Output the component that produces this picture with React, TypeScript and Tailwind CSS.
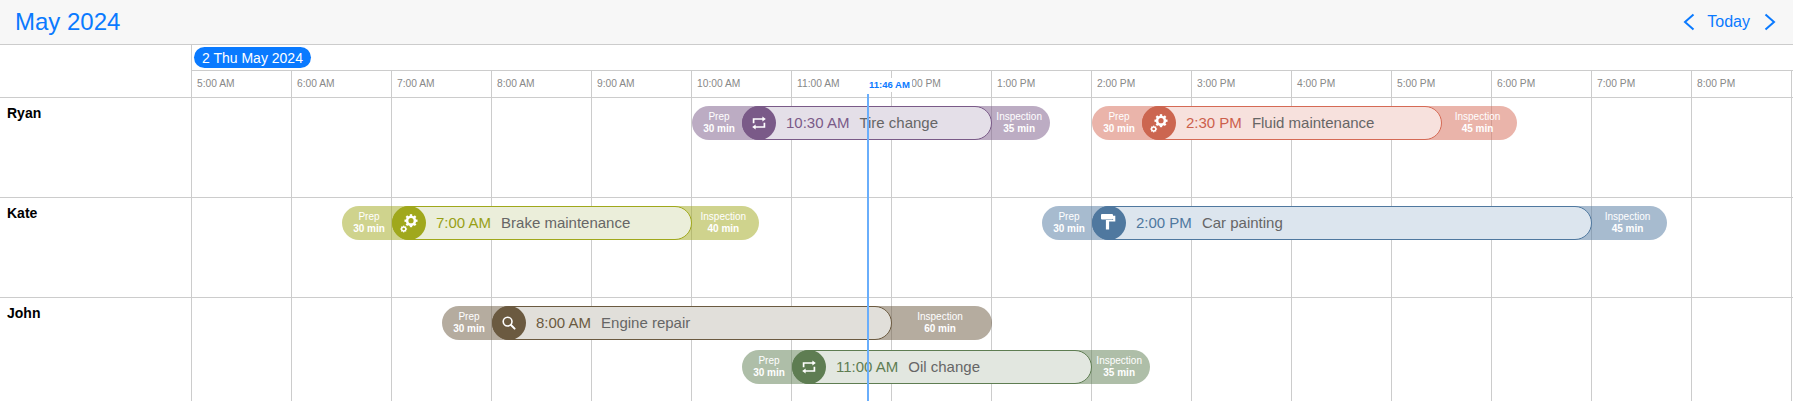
import React from "react";

const HOURS = ["5:00 AM","6:00 AM","7:00 AM","8:00 AM","9:00 AM","10:00 AM","11:00 AM","12:00 PM","1:00 PM","2:00 PM","3:00 PM","4:00 PM","5:00 PM","6:00 PM","7:00 PM","8:00 PM"];
const PX_PER_MIN = 100 / 60;

const Repeat = () => (
  <svg width="16" height="16" viewBox="0 0 16 16" fill="none" stroke="white" strokeWidth="1.7">
    <path d="M2.6 8.2V4H12" />
    <path d="M11.4 1.4L14.8 4L11.4 6.6Z" fill="white" stroke="none" />
    <path d="M13.4 7.8V12H4" />
    <path d="M4.6 9.4L1.2 12L4.6 14.6Z" fill="white" stroke="none" />
  </svg>
);

const Gear = ({ x, y, r }: { x: number; y: number; r: number }) => {
  const teeth = Array.from({ length: 8 }, (_, i) => i * 45);
  return (
    <g transform={`translate(${x} ${y})`}>
      {teeth.map((a) => (
        <rect key={a} x={-r * 0.18} y={-r} width={r * 0.36} height={r * 0.42} fill="white" transform={`rotate(${a})`} />
      ))}
      <circle r={r * 0.6} fill="none" stroke="white" strokeWidth={r * 0.4} />
    </g>
  );
};

const Gears = () => (
  <svg width="24" height="24" viewBox="0 0 24 24">
    <Gear x={14} y={9.7} r={6.5} />
    <Gear x={6.7} y={18} r={3.4} />
  </svg>
);

const Roller = () => (
  <svg width="18" height="20" viewBox="0 0 18 20" fill="white">
    <rect x="1" y="1" width="12" height="5.4" rx="1" />
    <path d="M13 2.8H15.3V8.6H9.1V16.4H5.9V6.9H13.2V6.4H13Z" />
  </svg>
);

const Search = () => (
  <svg width="18" height="18" viewBox="0 0 18 18" fill="none" stroke="white">
    <circle cx="7.6" cy="7.6" r="4.4" strokeWidth="1.6" />
    <path d="M11 11L14.6 14.6" strokeWidth="2" strokeLinecap="round" />
  </svg>
);

type Ev = {
  start: number; end: number; insp: number; top: number;
  time: string; title: string; icon: React.ReactNode;
  pill: string; main: string; dark: string; text: string;
};

const ROWS: { name: string; events: Ev[]; last?: boolean }[] = [
  { name: "Ryan", events: [
    { start: 10.5, end: 13, insp: 35, top: 8, time: "10:30 AM", title: "Tire change", icon: <Repeat />, pill: "bg-[#7a5a88]/50", main: "bg-[#e4dfe8] border-[#7a5a88]", dark: "bg-[#7a5a88]", text: "text-[#7a5a88]" },
    { start: 14.5, end: 17.5, insp: 45, top: 8, time: "2:30 PM", title: "Fluid maintenance", icon: <Gears />, pill: "bg-[#d56a55]/50", main: "bg-[#f7e1dd] border-[#d56a55]", dark: "bg-[#cc6650]", text: "text-[#cc5f4c]" },
  ]},
  { name: "Kate", events: [
    { start: 7, end: 10, insp: 40, top: 8, time: "7:00 AM", title: "Brake maintenance", icon: <Gears />, pill: "bg-[#a0a81c]/50", main: "bg-[#ebeeda] border-[#a0a81c]", dark: "bg-[#a0a81c]", text: "text-[#98a015]" },
    { start: 14, end: 19, insp: 45, top: 8, time: "2:00 PM", title: "Car painting", icon: <Roller />, pill: "bg-[#4f789f]/50", main: "bg-[#dce5ee] border-[#4f789f]", dark: "bg-[#4f789f]", text: "text-[#4f789f]" },
  ]},
  { name: "John", last: true, events: [
    { start: 8, end: 12, insp: 60, top: 8, time: "8:00 AM", title: "Engine repair", icon: <Search />, pill: "bg-[#6b5a40]/50", main: "bg-[#e1dfda] border-[#6b5a40]", dark: "bg-[#6b5a40]", text: "text-[#6b5a40]" },
    { start: 11, end: 14, insp: 35, top: 52, time: "11:00 AM", title: "Oil change", icon: <Repeat />, pill: "bg-[#5e7d52]/50", main: "bg-[#e2e7e0] border-[#5e7d52]", dark: "bg-[#5e7d52]", text: "text-[#5e7d52]" },
  ]},
];

const Event = ({ e }: { e: Ev }) => {
  const left = (e.start - 5) * 100 - 50;
  const width = 50 + (e.end - e.start) * 100 + e.insp * PX_PER_MIN;
  return (
    <div
      className={`absolute flex h-[34px] rounded-[17px] ${e.pill} text-white text-[10px] leading-[12px]`}
      style={{ left, width, top: e.top }}
    >
      <div className="flex w-[50px] shrink-0 flex-col items-center justify-center pl-1">
        <span>Prep</span>
        <span className="font-bold">30 min</span>
      </div>
      <div
        className={`flex h-[34px] items-center rounded-[17px] border pb-[2px] ${e.main}`}
        style={{ width: (e.end - e.start) * 100 }}
      >
        <div className={`-mb-[2px] -ml-px flex h-[34px] w-[34px] shrink-0 items-center justify-center rounded-full ${e.dark}`}>
          {e.icon}
        </div>
        <span className={`ml-[10px] text-[15px] leading-none ${e.text}`}>{e.time}</span>
        <span className="ml-[10px] text-[15px] leading-none text-[#666666]">{e.title}</span>
      </div>
      <div className="flex flex-1 flex-col items-center justify-center pr-1">
        <span>Inspection</span>
        <span className="font-bold">{e.insp} min</span>
      </div>
    </div>
  );
};

export default function App() {
  return (
    <div className="relative h-[401px] w-[1793px] overflow-hidden bg-white font-['Liberation_Sans',Arial,sans-serif]">
      <header className="flex h-[45px] items-center justify-between border-b border-[#cccccc] bg-[#f7f7f7] pl-[15px] pr-[17px]">
        <h1 className="text-[24px] leading-none text-[#0a7aff]">May 2024</h1>
        <div className="flex items-center text-[#0a7aff]">
          <svg width="12" height="18" viewBox="0 0 12 18" fill="none" stroke="currentColor" strokeWidth="2">
            <path d="M10.5 1.5L2 9L10.5 16.5" />
          </svg>
          <span className="ml-[12px] mr-[14px] text-[16px] leading-none">Today</span>
          <svg width="12" height="18" viewBox="0 0 12 18" fill="none" stroke="currentColor" strokeWidth="2">
            <path d="M1.5 1.5L10 9L1.5 16.5" />
          </svg>
        </div>
      </header>

      <div className="flex h-[53px] border-b border-[#cccccc]">
        <div className="w-[191px] shrink-0" />
        <div className="flex flex-1 flex-col border-l border-[#cccccc]">
          <div className="flex h-[26px] items-start border-b border-[#cccccc] pl-[2px] pt-[2px]">
            <span className="flex h-[21px] items-center rounded-full bg-[#0a7aff] px-2 text-[14px] leading-none text-white">2 Thu May 2024</span>
          </div>
          <div className="flex flex-1">
            {HOURS.map((h, i) => (
              <div key={h} className={i === 0 ? "flex w-[99px] shrink-0 items-center pl-[5px] text-[10.25px] leading-none text-[#888888]" : "flex w-[100px] shrink-0 items-center border-l border-[#cccccc] pl-[5px] text-[10.25px] leading-none text-[#888888]"}>
                {h}
              </div>
            ))}
            <div className="border-l border-[#cccccc]" />
          </div>
        </div>
      </div>

      {ROWS.map((row) => (
        <div key={row.name} className={row.last ? "flex h-[120px]" : "flex h-[100px] border-b border-[#cccccc]"}>
          <div className="w-[191px] shrink-0 pl-[7px] pt-[7px] text-[14px] font-bold leading-4 text-black">{row.name}</div>
          <div className="relative flex flex-1 border-l border-[#cccccc]">
            {HOURS.map((h, i) => (
              <div key={h} className={i === 0 ? "w-[99px] shrink-0" : "w-[100px] shrink-0 border-l border-[#cccccc]"} />
            ))}
            <div className="border-l border-[#cccccc]" />
            {row.events.map((e) => (
              <Event key={e.title} e={e} />
            ))}
          </div>
        </div>
      ))}

      <div className="absolute bottom-0 left-[867px] top-[94px] w-[1.5px] bg-[#6aaefb]" />
      <div className="absolute left-[867px] top-[78px] bg-white pl-[2px] pr-[2px] text-[9.5px] font-bold leading-[14px] text-[#0a7aff]">11:46 AM</div>
    </div>
  );
}
